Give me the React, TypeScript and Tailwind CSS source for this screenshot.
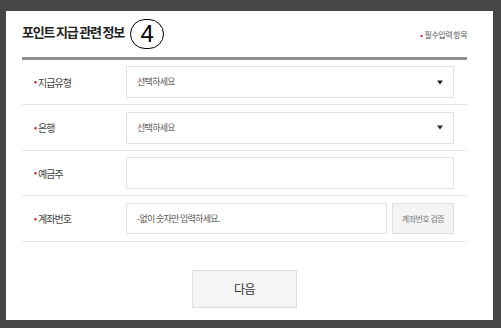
import React from "react";

const font = { fontFamily: '"Noto Sans CJK KR", "Noto Sans", sans-serif' };

function Arrow() {
  return (
    <svg width="6" height="5" viewBox="0 0 6 5" className="shrink-0">
      <path d="M0 0.5 H6 L3 4.5 Z" fill="#222" />
    </svg>
  );
}

function Label({ text }: { text: string }) {
  return (
    <div className="w-[104px] shrink-0 pl-[12px] flex items-center text-[10px] tracking-[-1px] text-[#444]">
      <span className="text-[#c8102e] mr-[2px] text-[9px]">•</span>
      {text}
    </div>
  );
}

function SelectBox() {
  return (
    <div className="flex-1 h-[32px] border border-[#e2e2e2] flex items-center justify-between pl-[10px] pr-[10px]">
      <span className="text-[9px] tracking-[-0.7px] text-[#555]">선택하세요</span>
      <Arrow />
    </div>
  );
}

export default function App() {
  return (
    <div className="w-[501px] h-[328px] bg-[#464646] pt-[11px] pl-[6px] pr-[8px] pb-[8px]" style={font}>
      <div className="bg-white h-full pl-[16px] pr-[26px] flex flex-col">
        {/* header */}
        <div className="h-[46px] flex items-center justify-between pb-[4px]">
          <div className="flex items-center">
            <h2 className="text-[13px] font-bold tracking-[-1.2px] text-[#222]">포인트 지급 관련 정보</h2>
            <div className="ml-[6px] mt-[4px] w-[34px] h-[30px] rounded-full border border-black flex items-center justify-center text-[24px] leading-none text-black" style={{ fontFamily: '"Liberation Sans", sans-serif' }}>
              4
            </div>
          </div>
          <div className="flex items-center text-[8px] tracking-[-0.5px] text-[#555] mt-[6px]">
            <span className="text-[#c8102e] mr-[2px]">•</span>필수입력 항목
          </div>
        </div>
        <div className="h-[3px] bg-[#8e8e8e]" />

        {/* rows */}
        <div className="h-[45px] border-b border-[#e6e6e6] flex items-center pr-[13px]">
          <Label text="지급유형" />
          <SelectBox />
        </div>
        <div className="h-[46px] border-b border-[#e6e6e6] flex items-center pr-[13px]">
          <Label text="은행" />
          <SelectBox />
        </div>
        <div className="h-[45px] border-b border-[#e6e6e6] flex items-center pr-[13px]">
          <Label text="예금주" />
          <div className="flex-1 h-[32px] border border-[#e2e2e2]" />
        </div>
        <div className="h-[46px] border-b border-[#e6e6e6] flex items-center pr-[13px]">
          <Label text="계좌번호" />
          <div className="flex-1 h-[31px] border border-[#e2e2e2] flex items-center pl-[10px] text-[9px] tracking-[-0.7px] text-[#555]">
            -없이 숫자만 입력하세요.
          </div>
          <button className="ml-[5px] w-[62px] h-[31px] bg-[#f4f4f4] border border-[#e0e0e0] text-[8px] tracking-[-0.5px] text-[#777]">
            계좌번호 검증
          </button>
        </div>

        {/* next */}
        <div className="flex justify-center pt-[28px]">
          <button className="w-[105px] h-[38px] bg-[#f5f5f5] border border-[#dedede] text-[12px] text-[#333] tracking-[-0.5px]">
            다음
          </button>
        </div>
      </div>
    </div>
  );
}
